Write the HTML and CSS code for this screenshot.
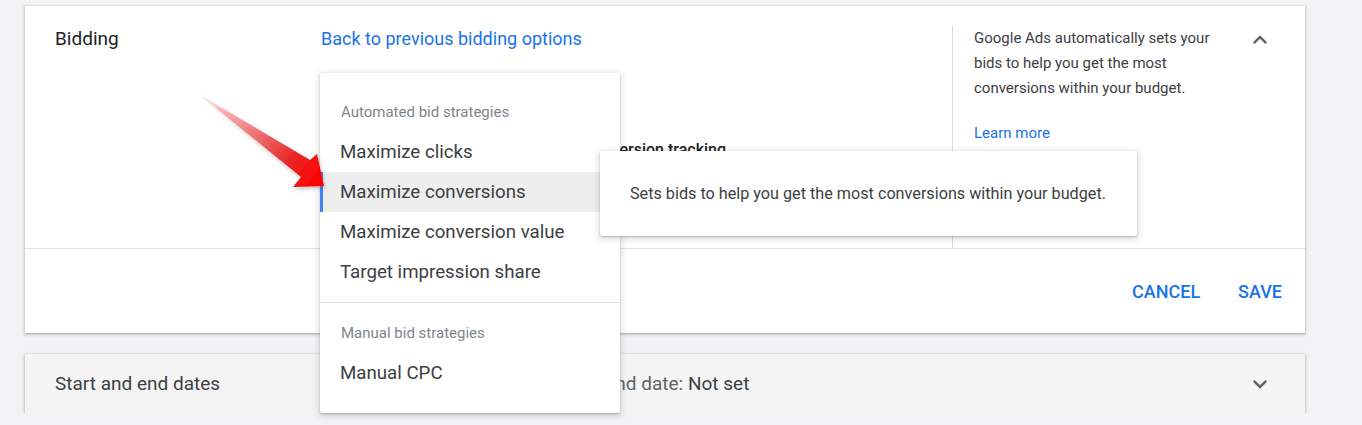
FILE: index.html
```html
<!DOCTYPE html>
<html lang="en">

<head>
    <meta charset="UTF-8">
    <meta name="viewport" content="width=device-width, initial-scale=1.0">
    <title>Bidding</title>
    <link rel="stylesheet" href="styles.css">
</head>

<body>
    <main class="page">
        <!-- Bidding panel (expanded) -->
        <section class="card">
            <div class="card-body">
                <div class="card-title">Bidding</div>
                <div class="card-content">
                    <a class="link" href="#">Back to previous bidding options</a>
                    <p class="focus-note">Maximize conversions with conversion tracking</p>
                </div>
                <aside class="card-help">
                    <p>Google Ads automatically sets your bids to help you get the most conversions within your budget.</p>
                    <a class="help-link" href="#">Learn more</a>
                </aside>
                <button class="icon-btn" aria-label="Collapse">
                    <svg viewBox="0 0 24 24" width="28" height="28"><path d="M12 8l-6 6 1.41 1.41L12 10.83l4.59 4.58L18 14z" fill="#5f6368"/></svg>
                </button>
            </div>
            <div class="card-actions">
                <button class="text-btn">Cancel</button>
                <button class="text-btn">Save</button>
            </div>
        </section>

        <!-- Start and end dates panel (collapsed) -->
        <section class="card card-collapsed">
            <div class="card-title">Start and end dates</div>
            <div class="card-summary">
                <span class="summary-label">Start date:</span> <span class="summary-value">Today</span>
                <span class="summary-gap"></span>
                <span class="summary-label">End date:</span> <span class="summary-value">Not set</span>
            </div>
            <button class="icon-btn" aria-label="Expand">
                <svg viewBox="0 0 24 24" width="28" height="28"><path d="M16.59 8.59L12 13.17 7.41 8.59 6 10l6 6 6-6z" fill="#5f6368"/></svg>
            </button>
        </section>
    </main>

    <!-- Bid strategy dropdown -->
    <div class="menu">
        <div class="menu-group">
            <div class="menu-header">Automated bid strategies</div>
            <div class="menu-item">Maximize clicks</div>
            <div class="menu-item selected">Maximize conversions</div>
            <div class="menu-item">Maximize conversion value</div>
            <div class="menu-item">Target impression share</div>
        </div>
        <div class="menu-group">
            <div class="menu-header">Manual bid strategies</div>
            <div class="menu-item">Manual CPC</div>
        </div>
    </div>

    <div class="tooltip">Sets bids to help you get the most conversions within your budget.</div>

    <!-- annotation arrow -->
    <svg class="arrow" width="1362" height="425" viewBox="0 0 1362 425">
        <defs>
            <linearGradient id="arrowFill" x1="197" y1="93" x2="318" y2="183" gradientUnits="userSpaceOnUse">
                <stop offset="0" stop-color="#ff0000" stop-opacity="0"/>
                <stop offset="0.35" stop-color="#f05050" stop-opacity="0.55"/>
                <stop offset="0.75" stop-color="#e82020" stop-opacity="0.95"/>
                <stop offset="1" stop-color="#ff0000"/>
            </linearGradient>
            <filter id="arrowShadow" x="-10%" y="-10%" width="130%" height="130%">
                <feDropShadow dx="1" dy="2" stdDeviation="2" flood-color="#000" flood-opacity="0.25"/>
            </filter>
        </defs>
        <polygon points="197,93 310,160 317,154 324,186 293,187 301,177" fill="url(#arrowFill)" filter="url(#arrowShadow)"/>
    </svg>
</body>

</html>
```

FILE: styles.css
```css
body {
    font-family: Roboto, "Liberation Sans", Arial, sans-serif;
    background: #f1f3f4;
    margin: 0;
    padding: 0;
    color: #202124;
}

.page {
    padding: 6px 0 0 25px;
}

.card {
    width: 1280px;
    background: #fff;
    box-shadow: 0 1px 2px rgba(60, 64, 67, 0.3), 0 1px 3px 1px rgba(60, 64, 67, 0.15);
}

.card-body {
    display: flex;
    height: 242px;
    padding-top: 20px;
    box-sizing: border-box;
}

.card-title {
    width: 266px;
    padding-left: 30px;
    font-size: 19px;
    line-height: 26px;
    color: #202124;
}

.card-content {
    flex: 1;
}

.link {
    font-size: 18px;
    line-height: 26px;
    color: #1a73e8;
    text-decoration: none;
}

.focus-note {
    margin: 86px 0 0;
    padding-left: 66px;
    font-size: 16px;
    line-height: 24px;
    font-weight: 500;
    color: #202124;
}

.card-help {
    width: 272px;
    border-left: 1px solid #dadce0;
    padding-left: 21px;
}

.card-help p {
    width: 245px;
    margin: 0;
    font-size: 15px;
    line-height: 25px;
    color: #3c4043;
}

.help-link {
    display: inline-block;
    margin-top: 20px;
    font-size: 15px;
    line-height: 25px;
    color: #1a73e8;
    text-decoration: none;
}

.icon-btn {
    align-self: flex-start;
    width: 28px;
    height: 28px;
    margin-right: 31px;
    padding: 0;
    border: none;
    background: none;
}

.icon-btn svg {
    display: block;
}

.card-actions {
    display: flex;
    justify-content: flex-end;
    align-items: center;
    gap: 22px;
    height: 84px;
    padding-right: 15px;
    border-top: 1px solid #e0e0e0;
}

.text-btn {
    padding: 0 8px;
    border: none;
    background: none;
    font-family: inherit;
    font-size: 18px;
    font-weight: 500;
    text-transform: uppercase;
    color: #1a73e8;
}

.card-collapsed {
    display: flex;
    align-items: center;
    height: 59px;
    margin-top: 21px;
    background: #f4f4f4;
}

.card-collapsed .card-title {
    color: #3c4043;
}

.card-collapsed .icon-btn {
    align-self: center;
}

.card-summary {
    flex: 1;
    font-size: 19px;
    color: #3c4043;
}

.summary-label {
    color: #5f6368;
}

.summary-gap {
    display: inline-block;
    width: 131px;
}

/* dropdown */
.menu {
    position: absolute;
    left: 320px;
    top: 73px;
    width: 300px;
    padding: 9px 0 10px;
    background: #fff;
    border-radius: 2px;
    box-shadow: 0 1px 2px rgba(60, 64, 67, 0.3), 0 2px 6px 2px rgba(60, 64, 67, 0.15);
    z-index: 2;
}

.menu-group {
    padding: 10px 0;
}

.menu-group + .menu-group {
    border-top: 1px solid #e0e0e0;
}

.menu-header {
    height: 40px;
    line-height: 40px;
    padding-left: 21px;
    font-size: 15px;
    color: #80868b;
}

.menu-item {
    height: 40px;
    line-height: 40px;
    padding-left: 20px;
    font-size: 18.7px;
    color: #3c4043;
}

.menu-item.selected {
    background: #eeeeee;
    border-left: 3px solid #4285f4;
    padding-left: 17px;
}

.tooltip {
    position: absolute;
    left: 600px;
    top: 151px;
    width: 537px;
    height: 85px;
    box-sizing: border-box;
    display: flex;
    align-items: center;
    padding-left: 30px;
    background: #fff;
    border-radius: 2px;
    box-shadow: 0 1px 2px rgba(60, 64, 67, 0.3), 0 2px 6px 2px rgba(60, 64, 67, 0.15);
    font-size: 16.2px;
    color: #3c4043;
    z-index: 3;
}

.arrow {
    position: absolute;
    left: 0;
    top: 0;
    pointer-events: none;
    z-index: 4;
}
```
